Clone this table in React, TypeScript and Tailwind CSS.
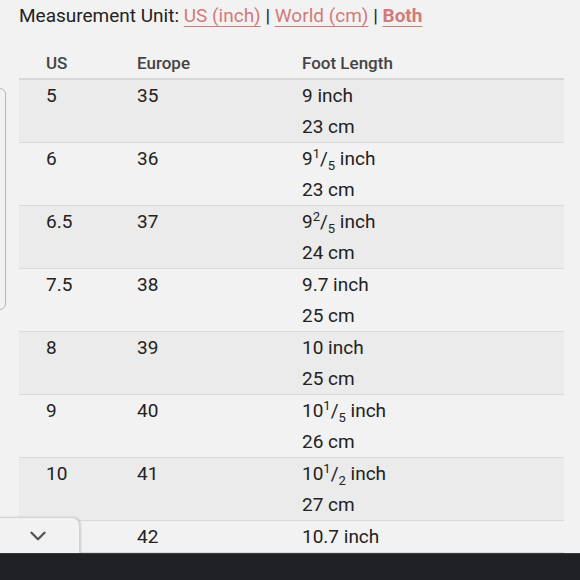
import { ChevronDown } from "lucide-react";

type Row = {
  us: string;
  eu: string;
  inch: React.ReactNode;
  cm?: string;
};

function Frac({ whole, num, den }: { whole: string; num: string; den: string }) {
  return (
    <>
      {whole}
      <sup className="text-[13px] top-[-7px]">{num}</sup>/
      <sub className="text-[13px] top-[5px] bottom-auto">{den}</sub> inch
    </>
  );
}

const rows: Row[] = [
  { us: "5", eu: "35", inch: "9 inch", cm: "23 cm" },
  { us: "6", eu: "36", inch: <Frac whole="9" num="1" den="5" />, cm: "23 cm" },
  { us: "6.5", eu: "37", inch: <Frac whole="9" num="2" den="5" />, cm: "24 cm" },
  { us: "7.5", eu: "38", inch: "9.7 inch", cm: "25 cm" },
  { us: "8", eu: "39", inch: "10 inch", cm: "25 cm" },
  { us: "9", eu: "40", inch: <Frac whole="10" num="1" den="5" />, cm: "26 cm" },
  { us: "10", eu: "41", inch: <Frac whole="10" num="1" den="2" />, cm: "27 cm" },
  { us: "11", eu: "42", inch: "10.7 inch" },
];

export default function App() {
  return (
    <div className="w-[580px] h-[580px] overflow-hidden bg-[#f2f2f2] flex flex-col font-['Roboto',sans-serif] text-[#222] relative">
      <div className="h-[553px] overflow-hidden px-[19px]">
        <div className="text-[19px] leading-[32px]">
          Measurement Unit:{" "}
          <span className="text-[#d27a7a] underline decoration-1 underline-offset-[4px]">US (inch)</span>{" "}
          |{" "}
          <span className="text-[#d27a7a] underline decoration-1 underline-offset-[4px]">World (cm)</span>{" "}
          |{" "}
          <span className="text-[#d27a7a] font-bold underline decoration-1 underline-offset-[4px]">Both</span>
        </div>

        <div className="w-[545px] mt-[18px]">
          <div className="flex h-[30px] items-center border-b-2 border-[#d6d6d6] text-[17px] font-medium text-[#444]">
            <div className="w-[118px] shrink-0 pl-[27px]">US</div>
            <div className="w-[165px] shrink-0">Europe</div>
            <div className="flex-1">Foot Length</div>
          </div>
          {rows.map((r, i) => (
            <div
              key={r.us}
              className={`flex text-[19px] leading-[31px] border-b border-[#d9d9d9] ${
                i % 2 === 0 ? "bg-[#ebebeb]" : "bg-[#f2f2f2]"
              }`}
            >
              <div className="w-[118px] shrink-0 pl-[27px]">{r.us}</div>
              <div className="w-[165px] shrink-0">{r.eu}</div>
              <div className="flex-1">
                <div>{r.inch}</div>
                {r.cm && <div>{r.cm}</div>}
              </div>
            </div>
          ))}
        </div>
      </div>

      <div className="h-[27px] bg-[#202124] border-t border-[#3a3a3a]" />

      <div className="absolute -left-[10px] top-[88px] w-[16px] h-[222px] border border-[#b8b8b8] rounded-[6px]" />

      <div className="absolute left-0 top-[517px] w-[80px] h-[36px] bg-[#f2f2f2] rounded-tr-[8px] border-t border-r border-[#d4d4d4] shadow-[1px_0_2px_rgba(0,0,0,0.15)] flex items-center justify-center">
        <ChevronDown className="w-[26px] h-[26px] text-[#555] -ml-[4px]" strokeWidth={2.2} />
      </div>
    </div>
  );
}
